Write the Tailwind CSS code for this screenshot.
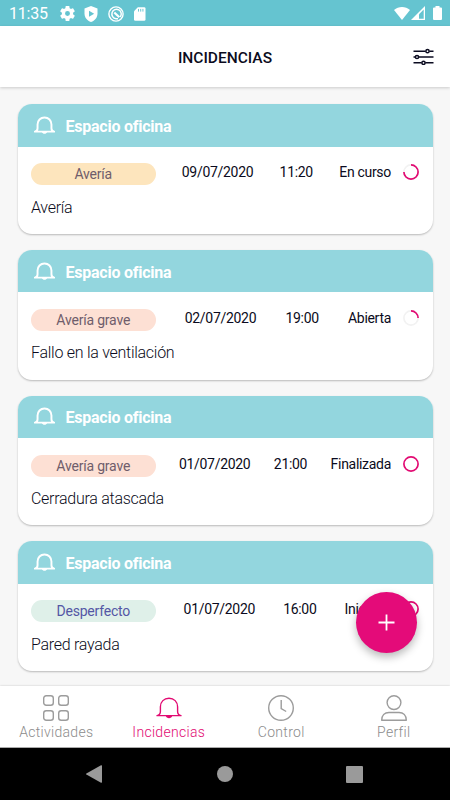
<!DOCTYPE html>
<html lang="es">
  <head>
    <meta charset="UTF-8" />
    <meta name="viewport" content="width=device-width, initial-scale=1.0" />
    <title>Incidencias</title>
    <script src="https://cdn.jsdelivr.net/npm/@tailwindcss/browser@4"></script>
  </head>

  <body class="bg-[#f7f7f7] font-['Roboto',sans-serif] text-[#0b0b20]">
    <!-- Shared icons -->
    <svg class="hidden">
      <symbol id="bell" viewBox="0 0 26 22">
        <path d="M1 18.6H25M1 18.6C3.6 18.2 4.4 17 4.4 14.5V9.8C4.4 4.8 8 1.2 13 1.2S21.6 4.8 21.6 9.8V14.5C21.6 17 22.4 18.2 25 18.6" fill="none" stroke="currentColor" stroke-linecap="round" stroke-linejoin="round" />
        <path d="M9.8 19H16.2C15.8 20.4 14.6 21.2 13 21.2S10.2 20.4 9.8 19Z" fill="currentColor" />
      </symbol>
    </svg>

    <div class="relative flex flex-col w-[450px] h-[800px] overflow-hidden">
      <!-- Status bar -->
      <div class="flex shrink-0 items-center h-[26px] bg-[#65c4d0] text-white pl-[9px] pr-2">
        <span class="w-[50px] text-[16px] leading-none tracking-[-0.2px] pt-[2px]">11:35</span>
        <svg class="w-[15px] h-[15px] mt-px ml-[0.5px]" viewBox="2 2 20 20" fill="currentColor">
          <path d="M19.4 13a7.8 7.8 0 0 0 0-2l2.1-1.6a.5.5 0 0 0 .1-.7l-2-3.4a.5.5 0 0 0-.6-.2l-2.5 1a7.5 7.5 0 0 0-1.7-1L14.5 2.4a.5.5 0 0 0-.5-.4h-4a.5.5 0 0 0-.5.4L9.2 5.1a7.5 7.5 0 0 0-1.7 1L5 5.1a.5.5 0 0 0-.6.2l-2 3.4a.5.5 0 0 0 .1.7L4.6 11a7.8 7.8 0 0 0 0 2l-2.1 1.6a.5.5 0 0 0-.1.7l2 3.4c.1.2.4.3.6.2l2.5-1a7.5 7.5 0 0 0 1.7 1l.3 2.7c0 .2.2.4.5.4h4c.3 0 .5-.2.5-.4l.3-2.7a7.5 7.5 0 0 0 1.7-1l2.5 1c.2.1.5 0 .6-.2l2-3.4a.5.5 0 0 0-.1-.7zM12 15.3a3.3 3.3 0 1 1 0-6.6 3.3 3.3 0 0 1 0 6.6z" />
        </svg>
        <svg class="w-[14px] h-4 ml-[9.5px] mt-px" viewBox="0 0 14 16">
          <path d="M7 0 13.5 2.5V7.5C13.5 11.6 10.8 14.7 7 16 3.2 14.7.5 11.6.5 7.5V2.5Z" fill="currentColor" />
          <path d="M5 4.7 10.2 7.7 5 10.7Z" fill="#65c4d0" />
        </svg>
        <svg class="w-4 h-4 ml-[9.5px] mt-px" viewBox="0 0 16 16" fill="none" stroke="currentColor">
          <circle cx="8" cy="8" r="7.1" stroke-width="1.4" />
          <path d="M12.2 11A4.7 4.7 0 1 0 8 12.7H10" stroke-width="1.5" />
          <path d="M6.3 6.5 11.3 11.3" stroke-width="2.2" />
        </svg>
        <svg class="w-[11.5px] h-[14px] ml-[10.5px] mt-px" viewBox="0 0 12 14">
          <path d="M4 0H10.6Q12 0 12 1.3V12.7Q12 14 10.6 14H1.4Q0 14 0 12.7V4Z" fill="currentColor" />
          <path d="M4.7 1.7V4.5M7 1.7V4.5M9.3 1.7V4.5" stroke="#65c4d0" stroke-width="1" />
        </svg>
        <svg class="w-4 h-[13px] ml-auto" viewBox="0 0 16 13">
          <path d="M8 13 0 3C4.5-1 11.5-1 16 3Z" fill="currentColor" />
        </svg>
        <svg class="w-[14px] h-[14px] ml-[1px]" viewBox="0 0 14 14">
          <path d="M14 0V14H0Z" fill="currentColor" />
          <path d="M12.7 3.5V12.7H8V8.2Z" fill="#65c4d0" />
        </svg>
        <svg class="w-[9px] h-[14px] ml-[8px]" viewBox="0 0 9 14">
          <path d="M2.5 1.4V0H6.5V1.4H8Q9 1.4 9 2.4V13Q9 14 8 14H1Q0 14 0 13V2.4Q0 1.4 1 1.4Z" fill="currentColor" />
        </svg>
      </div>

      <!-- Header -->
      <header class="relative flex shrink-0 items-center justify-center h-[61px] bg-white shadow-[0_1px_3px_rgba(0,0,0,0.18)]">
        <h1 class="text-[15.5px] font-medium leading-none pt-[4px]">INCIDENCIAS</h1>
        <svg class="absolute right-4 top-[22px] w-[21px] h-[17px]" viewBox="0 0 21 17" fill="none" stroke="currentColor" stroke-width="1.5">
          <path d="M.5 3.2H12.7M16.3 3.2H20.5M.5 9H2.3M5.7 9H20.5M.5 14.8H8.7M12.3 14.8H20.5" />
          <circle cx="14.5" cy="3.2" r="1.6" />
          <circle cx="4" cy="9" r="1.6" />
          <circle cx="10.5" cy="14.8" r="1.6" />
        </svg>
      </header>

      <!-- Incident list -->
      <main class="flex flex-col shrink-0 gap-[16px] h-[599px] pt-[17px] px-[17.5px]">
        <article class="h-[129.8px] shrink-0 rounded-[14px] overflow-hidden bg-white shadow-[0_1px_2px_rgba(0,0,0,0.25)]">
          <div class="flex items-center h-[42.5px] pl-4 bg-[#93d6de] text-white">
            <svg class="w-[21px] h-[19px]" stroke-width="2.4"><use href="#bell" /></svg>
            <h2 class="ml-[11px] pt-[3px] text-[16px] leading-none font-bold tracking-[-0.24px]">Espacio oficina</h2>
          </div>
          <div class="flex h-[22px] mt-[16.5px] px-[13.5px]">
            <div class="flex flex-1 justify-between text-[14px] leading-[19px] tracking-[-0.3px]">
              <span class="w-[124.5px] h-[22px] rounded-full bg-[#fde5bd] text-center leading-[23px] tracking-[-0.2px] text-[#6f5d6b]">Avería</span>
              <span>09/07/2020</span>
              <span>11:20</span>
              <span>En curso</span>
            </div>
            <svg class="w-4 h-4 ml-[12px] mt-[1px]" viewBox="0 0 16 16" fill="none" stroke-width="1.7">
              <circle cx="8" cy="8" r="7.1" stroke="#f2f2f2" />
              <path d="M8 .9A7.1 7.1 0 1 1 .9 8" stroke="#e20a72" />
            </svg>
          </div>
          <p class="px-[13.5px] mt-[12.5px] text-[16px] leading-[20px] font-light tracking-[-0.27px]">Avería</p>
        </article>

        <article class="h-[129.8px] shrink-0 rounded-[14px] overflow-hidden bg-white shadow-[0_1px_2px_rgba(0,0,0,0.25)]">
          <div class="flex items-center h-[42.5px] pl-4 bg-[#93d6de] text-white">
            <svg class="w-[21px] h-[19px]" stroke-width="2.4"><use href="#bell" /></svg>
            <h2 class="ml-[11px] pt-[3px] text-[16px] leading-none font-bold tracking-[-0.24px]">Espacio oficina</h2>
          </div>
          <div class="flex h-[22px] mt-[16.5px] px-[13.5px]">
            <div class="flex flex-1 justify-between text-[14px] leading-[19px] tracking-[-0.3px]">
              <span class="w-[124.5px] h-[22px] rounded-full bg-[#fde0d4] text-center leading-[23px] tracking-[-0.2px] text-[#6f5d6b]">Avería grave</span>
              <span>02/07/2020</span>
              <span>19:00</span>
              <span>Abierta</span>
            </div>
            <svg class="w-4 h-4 ml-[12px] mt-[1px]" viewBox="0 0 16 16" fill="none" stroke-width="1.7">
              <circle cx="8" cy="8" r="7.1" stroke="#f2f2f2" />
              <path d="M8 .9A7.1 7.1 0 0 1 15.1 8" stroke="#e20a72" />
            </svg>
          </div>
          <p class="px-[13.5px] mt-[12.5px] text-[16px] leading-[20px] font-light tracking-[-0.27px]">Fallo en la ventilación</p>
        </article>

        <article class="h-[129.8px] shrink-0 rounded-[14px] overflow-hidden bg-white shadow-[0_1px_2px_rgba(0,0,0,0.25)]">
          <div class="flex items-center h-[42.5px] pl-4 bg-[#93d6de] text-white">
            <svg class="w-[21px] h-[19px]" stroke-width="2.4"><use href="#bell" /></svg>
            <h2 class="ml-[11px] pt-[3px] text-[16px] leading-none font-bold tracking-[-0.24px]">Espacio oficina</h2>
          </div>
          <div class="flex h-[22px] mt-[16.5px] px-[13.5px]">
            <div class="flex flex-1 justify-between text-[14px] leading-[19px] tracking-[-0.3px]">
              <span class="w-[124.5px] h-[22px] rounded-full bg-[#fde0d4] text-center leading-[23px] tracking-[-0.2px] text-[#6f5d6b]">Avería grave</span>
              <span>01/07/2020</span>
              <span>21:00</span>
              <span>Finalizada</span>
            </div>
            <svg class="w-4 h-4 ml-[12px] mt-[1px]" viewBox="0 0 16 16" fill="none" stroke-width="1.7">
              <circle cx="8" cy="8" r="7.1" stroke="#e20a72" />
            </svg>
          </div>
          <p class="px-[13.5px] mt-[12.5px] text-[16px] leading-[20px] font-light tracking-[-0.27px]">Cerradura atascada</p>
        </article>

        <article class="h-[129.8px] shrink-0 rounded-[14px] overflow-hidden bg-white shadow-[0_1px_2px_rgba(0,0,0,0.25)]">
          <div class="flex items-center h-[42.5px] pl-4 bg-[#93d6de] text-white">
            <svg class="w-[21px] h-[19px]" stroke-width="2.4"><use href="#bell" /></svg>
            <h2 class="ml-[11px] pt-[3px] text-[16px] leading-none font-bold tracking-[-0.24px]">Espacio oficina</h2>
          </div>
          <div class="flex h-[22px] mt-[16.5px] px-[13.5px]">
            <div class="flex flex-1 justify-between text-[14px] leading-[19px] tracking-[-0.3px]">
              <span class="w-[124.5px] h-[22px] rounded-full bg-[#dff0e9] text-center leading-[23px] tracking-[-0.2px] text-[#5457a5]">Desperfecto</span>
              <span>01/07/2020</span>
              <span>16:00</span>
              <span>Iniciada</span>
            </div>
            <svg class="w-4 h-4 ml-[12px] mt-[1px]" viewBox="0 0 16 16" fill="none" stroke-width="1.7">
              <circle cx="8" cy="8" r="7.1" stroke="#e20a72" />
            </svg>
          </div>
          <p class="px-[13.5px] mt-[12.5px] text-[16px] leading-[20px] font-light tracking-[-0.27px]">Pared rayada</p>
        </article>
      </main>

      <!-- Add button -->
      <button aria-label="Añadir" class="absolute left-[356px] top-[592px] flex items-center justify-center w-[61px] h-[61px] rounded-full bg-[#e40b79] shadow-[0_4px_8px_rgba(0,0,0,0.28)]">
        <svg class="w-[17px] h-[17px]" viewBox="0 0 17 17" stroke="#fff" stroke-width="1.8">
          <path d="M8.5 .5V16.5M.5 8.5H16.5" />
        </svg>
      </button>

      <!-- Tab bar -->
      <nav class="grid grid-cols-4 shrink-0 h-[62px] bg-white border-b border-[#aaa] shadow-[0_0_2px_rgba(0,0,0,0.2)] text-[14px] leading-[16px] font-light tracking-[0.3px] text-[#8c8c8c]">
        <a class="flex flex-col items-center pt-[9px]">
          <svg class="w-[26px] h-[26px] text-[#9c9c9c]" viewBox="0 0 26 26" fill="none" stroke="currentColor" stroke-width="1.4">
            <rect x=".7" y=".7" width="9.6" height="9.6" rx="2.5" />
            <rect x="15.7" y=".7" width="9.6" height="9.6" rx="2.5" />
            <rect x=".7" y="15.7" width="9.6" height="9.6" rx="2.5" />
            <rect x="15.7" y="15.7" width="9.6" height="9.6" rx="2.5" />
          </svg>
          <span class="mt-[3px]">Actividades</span>
        </a>
        <a class="flex flex-col items-center pt-[9px] text-[#e20a72]">
          <svg class="w-[26px] h-[22px] mt-[2px] mb-[2px]" stroke-width="1.4"><use href="#bell" /></svg>
          <span class="mt-[3px]">Incidencias</span>
        </a>
        <a class="flex flex-col items-center pt-[9px]">
          <svg class="w-[26px] h-[26px] text-[#9c9c9c]" viewBox="0 0 26 26" fill="none" stroke="currentColor" stroke-width="1.4">
            <circle cx="13" cy="13" r="12.3" />
            <path d="M13.2 5V13.5L18.2 16.5" />
          </svg>
          <span class="mt-[3px]">Control</span>
        </a>
        <a class="flex flex-col items-center pt-[9px]">
          <svg class="w-[26px] h-[26px] text-[#9c9c9c]" viewBox="0 0 26 26" fill="none" stroke="currentColor" stroke-width="1.4">
            <circle cx="13" cy="7.6" r="6.9" />
            <path d="M.7 25.3C.7 20.5 3.7 17.5 8 17.5H18C22.3 17.5 25.3 20.5 25.3 25.3Z" stroke-linejoin="round" />
          </svg>
          <span class="mt-[3px]">Perfil</span>
        </a>
      </nav>

      <!-- System navigation -->
      <div class="flex flex-1 items-center bg-black pl-[86px] text-[#9a9a9a]">
        <svg class="w-4 h-[18px]" viewBox="0 0 16 18" fill="currentColor">
          <path d="M15 .3Q16 0 16 1V17Q16 18 15 17.7L.4 9.6Q-.3 9 .4 8.4Z" />
        </svg>
        <div class="w-4 h-4 ml-[115px] rounded-full bg-[#9a9a9a]"></div>
        <div class="w-[17px] h-[17px] ml-[113px] rounded-[1px] bg-[#9a9a9a]"></div>
      </div>
    </div>
  </body>
</html>
